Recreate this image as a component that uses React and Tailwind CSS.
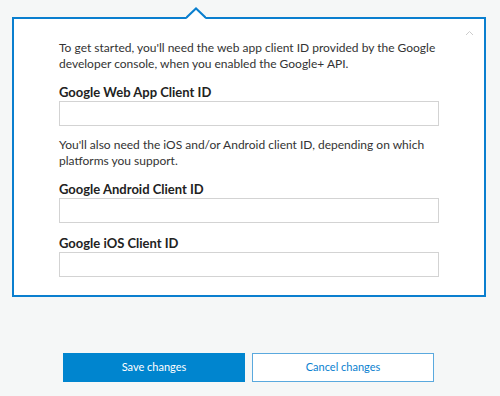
import React from 'react';

const Field = ({ label }) => (
  <div className="mt-[12px]">
    <label className="block text-[13px] leading-[16px] font-bold text-[#222]">{label}</label>
    <input
      type="text"
      className="mt-[1px] block w-full h-[25px] bg-white border border-[#d3d3d3] outline-none"
    />
  </div>
);

const App = () => (
  <div
    className="min-h-[396px] bg-[#f5f7f7] pt-[17px]"
    style={{ fontFamily: 'Lato, "Open Sans", sans-serif' }}
  >
    {/* Settings panel */}
    <div className="relative mx-[12px] w-[474px] bg-white border-2 border-[#0a7fcf] px-[45px] pt-[21px] pb-[18px] text-[#333]">
      {/* notch */}
      <svg className="absolute left-[172px] top-[-12px]" width="20" height="13" viewBox="0 0 20 13">
        <path d="M0 12 L10 2 L20 12 Z" fill="#fff" />
        <path d="M0 11 L10 1.5 L20 11" fill="none" stroke="#0a7fcf" strokeWidth="2" />
      </svg>
      {/* collapse chevron */}
      <svg className="absolute right-[10px] top-[11px]" width="9" height="6" viewBox="0 0 9 6">
        <path d="M1 5 L4.5 1.5 L8 5" fill="none" stroke="#ccc" strokeWidth="1" />
      </svg>

      <p className="text-[12px] leading-[16px] whitespace-nowrap">
        To get started, you'll need the web app client ID provided by the Google
        <br />
        developer console, when you enabled the Google+ API.
      </p>
      <Field label="Google Web App Client ID" />

      <p className="mt-[11px] text-[12px] leading-[16px] whitespace-nowrap">
        You'll also need the iOS and/or Android client ID, depending on which
        <br />
        platforms you support.
      </p>
      <Field label="Google Android Client ID" />
      <Field label="Google iOS Client ID" />
    </div>

    {/* Actions */}
    <div className="mt-[56px] ml-[63px] flex gap-[7px]">
      <button className="w-[182px] h-[29px] bg-[#0085cf] text-white text-[11px]">Save changes</button>
      <button className="w-[182px] h-[29px] bg-white border border-[#5aa9de] text-[#0a7fcf] text-[11px]">
        Cancel changes
      </button>
    </div>
  </div>
);

export default App;
